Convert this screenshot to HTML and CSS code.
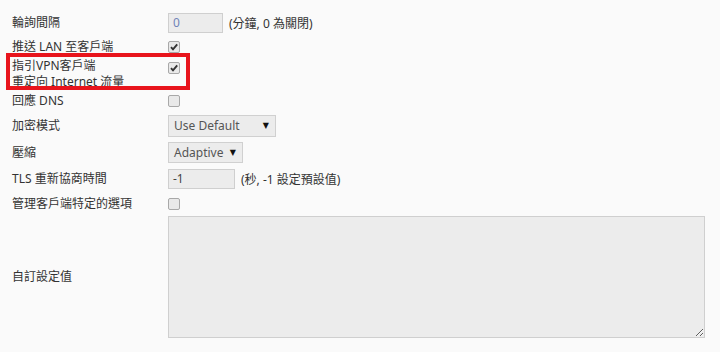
FILE: index.html
```html
<!DOCTYPE html>
<html lang="zh-Hant">
<head>
<meta charset="utf-8">
<link rel="stylesheet" href="styles.css">
</head>
<body>
<div class="form">
  <div class="row r1">
    <div class="label">輪詢間隔</div>
    <div class="ctrl">
      <span class="input w55 blue">0</span>
      <span class="hint">(分鐘, 0 為關閉)</span>
    </div>
  </div>
  <div class="row r2">
    <div class="label">推送 LAN 至客戶端</div>
    <div class="ctrl"><span class="cb checked"><svg viewBox="0 0 12 12"><path d="M3 6.2 L5 8.4 L9.2 3.4" fill="none" stroke="#333" stroke-width="1.9"/></svg></span></div>
  </div>
  <div class="row r3">
    <div class="label twoline"><span class="ln">指引VPN客戶端</span><span class="ln">重定向 Internet 流量</span></div>
    <div class="ctrl top"><span class="cb checked"><svg viewBox="0 0 12 12"><path d="M3 6.2 L5 8.4 L9.2 3.4" fill="none" stroke="#333" stroke-width="1.9"/></svg></span></div>
    <div class="highlight"></div>
  </div>
  <div class="row r4">
    <div class="label">回應 DNS</div>
    <div class="ctrl"><span class="cb"></span></div>
  </div>
  <div class="row r5">
    <div class="label">加密模式</div>
    <div class="ctrl"><span class="select w108">Use Default<span class="arrow">▼</span></span></div>
  </div>
  <div class="row r6">
    <div class="label">壓縮</div>
    <div class="ctrl"><span class="select w75 h21">Adaptive<span class="arrow">▼</span></span></div>
  </div>
  <div class="row r7">
    <div class="label">TLS 重新協商時間</div>
    <div class="ctrl">
      <span class="input w67">-1</span>
      <span class="hint">(秒, -1 設定預設值)</span>
    </div>
  </div>
  <div class="row r8">
    <div class="label">管理客戶端特定的選項</div>
    <div class="ctrl"><span class="cb"></span></div>
  </div>
  <div class="row r9">
    <div class="label">自訂設定值</div>
    <div class="ctrl"><textarea class="area"></textarea></div>
  </div>
</div>
</body>
</html>
```
FILE: styles.css
```css
html, body {
  margin: 0;
  padding: 0;
  background: #fafafa;
}
body {
  font-family: "Noto Sans", "Noto Sans CJK TC", sans-serif;
  font-size: 12px;
  color: #333;
  width: 720px;
  height: 352px;
  overflow: hidden;
}
.form {
  padding-top: 10px;
  display: flex;
  flex-direction: column;
}
.row {
  display: flex;
  align-items: center;
  position: relative;
}
.r1 { height: 25px; }
.r2 { height: 24px; }
.r3 { height: 31px; align-items: flex-start; }
.r4 { height: 22px; }
.r5 { height: 27px; }
.r6 { height: 27px; }
.r7 { height: 26px; }
.r8 { height: 24px; }
.r9 { height: 122px; }
.label {
  width: 156px;
  padding-left: 12px;
  line-height: 14px;
  flex: none;
}
.label.twoline {
  display: flex;
  flex-direction: column;
  gap: 0;
  margin-top: -1.5px;
}
.ln {
  display: block;
  line-height: 16.5px;
  height: 16.5px;
}
.ctrl {
  display: flex;
  align-items: center;
  gap: 6px;
}
.ctrl.top { padding-top: 3px; }
.input {
  box-sizing: border-box;
  height: 20px;
  border: 1px solid #cfcfcf;
  background: #ececec;
  color: #444;
  padding-left: 4px;
  line-height: 18px;
  display: inline-block;
}
.input.blue { color: #7083b8; }
.w55 { width: 55px; }
.w67 { width: 67px; }
.hint { color: #333; }
.cb {
  box-sizing: border-box;
  width: 12px;
  height: 12px;
  border: 1px solid #a8a8a8;
  border-radius: 2px;
  background: #e9e9e9;
  display: inline-block;
  position: relative;
}
.cb svg {
  position: absolute;
  left: -1px;
  top: -1px;
  width: 12px;
  height: 12px;
}
.select {
  box-sizing: border-box;
  height: 22px;
  border: 1px solid #d0d0d0;
  background: #ececec;
  color: #555;
  padding-left: 5px;
  padding-right: 6px;
  line-height: 20px;
  display: inline-flex;
  align-items: center;
  justify-content: space-between;
}
.select .arrow {
  font-size: 8px;
  color: #111;
  font-family: "DejaVu Sans", sans-serif;
}
.w108 { width: 108px; }
.w75 { width: 75px; }
.h21 { height: 21px; }
.area {
  box-sizing: border-box;
  width: 537px;
  height: 122px;
  border: 1px solid #cfcfcf;
  background: #ececec;
  margin: 0;
  padding: 0;
  display: block;
  resize: both;
}
.highlight {
  position: absolute;
  left: 6px;
  top: -6px;
  width: 184px;
  height: 37px;
  box-sizing: border-box;
  border: 4px solid #e8141c;
  pointer-events: none;
}
```
